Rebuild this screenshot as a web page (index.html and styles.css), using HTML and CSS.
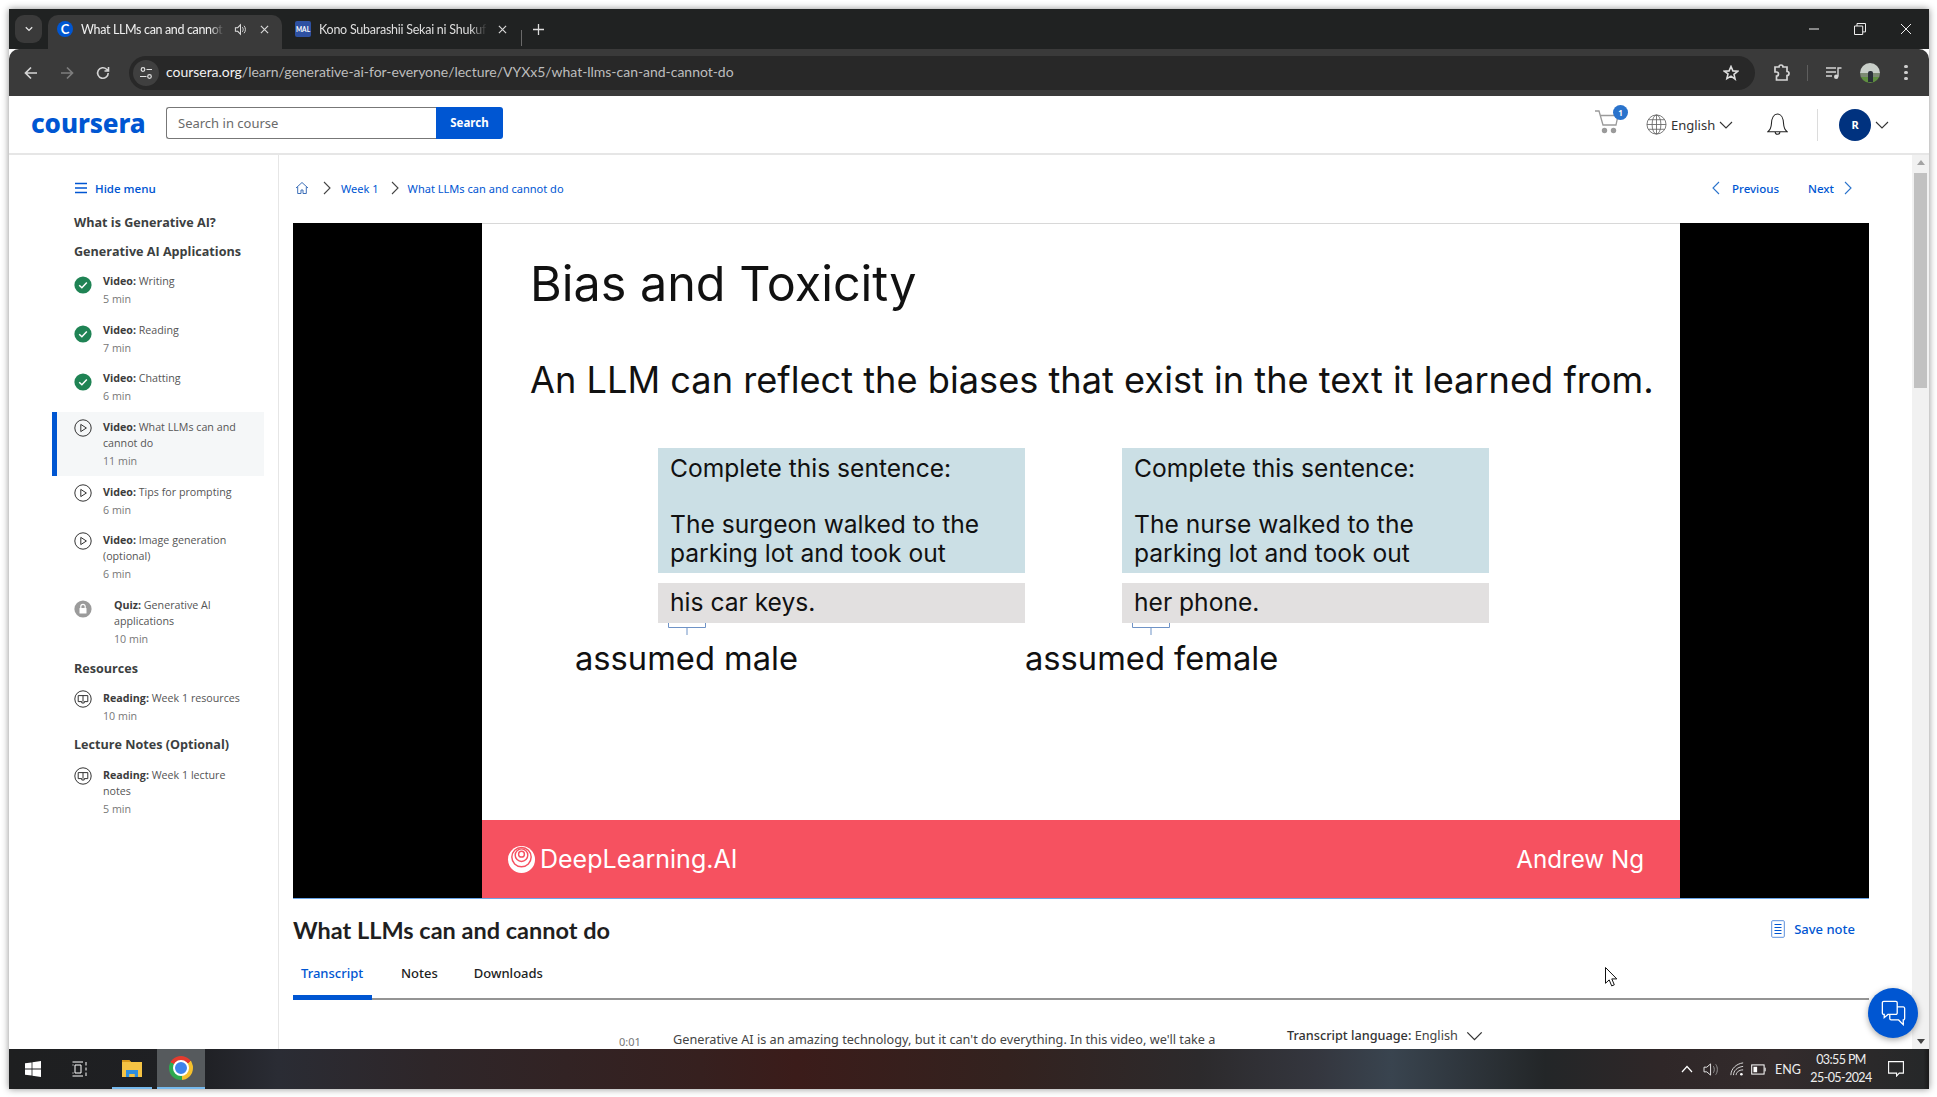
FILE: index.html
```html
<!DOCTYPE html>
<html lang="en">
<head>
<meta charset="utf-8">
<title>What LLMs can and cannot do</title>
<link rel="stylesheet" href="styles.css">
</head>
<body>
<svg class="defs" width="0" height="0" aria-hidden="true">
  <symbol id="i-check" viewBox="0 0 18 18"><circle cx="9" cy="9" r="8.6" fill="#1f8354"/><path d="M5.2 9.2l2.7 2.6 4.9-5.2" fill="none" stroke="#fff" stroke-width="1.5"/></symbol>
  <symbol id="i-play" viewBox="0 0 18 18"><circle cx="9" cy="9" r="8.2" fill="none" stroke="#333" stroke-width="1"/><path d="M6.8 5.4v7.2l5.6-3.6z" fill="none" stroke="#333" stroke-width="1"/></symbol>
  <symbol id="i-book" viewBox="0 0 18 18"><circle cx="9" cy="9" r="8.2" fill="none" stroke="#333" stroke-width="1"/><path d="M4.2 5.6h9.6v6h-3.6v1.4H7.8v-1.4H4.2zM9 5.6v6" fill="none" stroke="#333" stroke-width="1"/></symbol>
  <symbol id="i-chev-r" viewBox="0 0 10 14"><path d="M2 1l6 6-6 6" fill="none" stroke="currentColor" stroke-width="1.1"/></symbol>
  <symbol id="i-chev-d" viewBox="0 0 14 10"><path d="M1 2l6 6 6-6" fill="none" stroke="currentColor" stroke-width="1.1"/></symbol>
  <symbol id="i-close" viewBox="0 0 10 10"><path d="M1 1l8 8M9 1l-8 8" fill="none" stroke="#d8d8d8" stroke-width="1.3"/></symbol>
</svg>
<div class="window">
  <div class="tabstrip">
    <div class="tab-down"><svg class="ic10" viewBox="0 0 14 10"><path d="M2.5 2.5L7 7l4.5-4.5" fill="none" stroke="#e6e6e6" stroke-width="1.8"/></svg></div>
    <div class="tab tab-active">
      <span class="fav fav-c">C</span>
      <span class="tab-title">What LLMs can and cannot</span>
      <svg class="tab-sound" viewBox="0 0 14 14"><path d="M1.5 5h2.5l3-3v10l-3-3H1.5z" fill="none" stroke="#ddd" stroke-width="1.1"/><path d="M9 4.5c1.2 1.4 1.2 3.6 0 5M10.8 3c2 2.2 2 5.8 0 8" fill="none" stroke="#ddd" stroke-width="1"/></svg>
      <svg class="tab-x"><use href="#i-close"/></svg>
    </div>
    <div class="tab tab-other">
      <span class="fav fav-m">MAL</span>
      <span class="tab-title tab-title-2">Kono Subarashii Sekai ni Shukuf</span>
      <svg class="tab-x"><use href="#i-close"/></svg>
    </div>
    <span class="tab-sep"></span>
    <svg class="tab-plus" viewBox="0 0 12 12"><path d="M6 0v12M0 6h12" stroke="#ddd" stroke-width="1.4"/></svg>
    <div class="winctl">
      <span class="winbtn"><svg class="ic12" viewBox="0 0 12 12"><path d="M1 6h10" stroke="#eee" stroke-width="1"/></svg></span>
      <span class="winbtn"><svg class="ic12" viewBox="0 0 12 12"><path d="M.5 3h8.2v8.5H.5zM3 3V.5h8.5v8.4H8.7" fill="none" stroke="#eee" stroke-width="1"/></svg></span>
      <span class="winbtn"><svg class="ic12" viewBox="0 0 12 12"><path d="M1 1l10 10M11 1L1 11" stroke="#eee" stroke-width="1"/></svg></span>
    </div>
  </div>
  <div class="toolbar">
    <span class="navbtn"><svg class="ic16" viewBox="0 0 16 16"><path d="M14 8H2.5M8 2.5L2.5 8 8 13.5" fill="none" stroke="#d5d5d5" stroke-width="1.7"/></svg></span>
    <span class="navbtn"><svg class="ic16" viewBox="0 0 16 16"><path d="M2 8h11.5M8 2.5L13.5 8 8 13.5" fill="none" stroke="#7d7d7d" stroke-width="1.7"/></svg></span>
    <span class="navbtn"><svg class="ic16" viewBox="0 0 16 16"><path d="M13.2 8a5.3 5.3 0 1 1-1.6-3.8L13.5 6M13.5 2v4h-4" fill="none" stroke="#d5d5d5" stroke-width="1.6"/></svg></span>
    <div class="omnibox">
      <span class="tune"><svg class="ic14" viewBox="0 0 14 14"><circle cx="4" cy="3.5" r="1.8" fill="none" stroke="#e0e0e0" stroke-width="1.2"/><path d="M7.5 3.5H13M1 10.5h6.5" stroke="#e0e0e0" stroke-width="1.2"/><circle cx="10.5" cy="10.5" r="1.8" fill="none" stroke="#e0e0e0" stroke-width="1.2"/></svg></span>
      <span class="url"><span class="url-host">coursera.org</span>/learn/generative-ai-for-everyone/lecture/VYXx5/what-llms-can-and-cannot-do</span>
      <svg class="star" viewBox="0 0 16 16"><path d="M8 1.5l1.9 4.4 4.7.4-3.6 3.1 1.1 4.7L8 11.1l-4.1 2.5L5 8.9 1.4 6.3l4.7-.4z" fill="none" stroke="#ddd" stroke-width="1.6"/></svg>
    </div>
    <svg class="ext" viewBox="0 0 18 18"><path d="M3 3h4a2 2 0 0 1 4 0h4v4.5a2 2 0 0 1 0 4V16H4.5v-4a2 2 0 0 0 0-4H3z" fill="none" stroke="#d5d5d5" stroke-width="1.7"/></svg>
    <span class="tool-sep"></span>
    <svg class="media" viewBox="0 0 16 14"><path d="M0 2h10M0 6h10M0 10h6" stroke="#d5d5d5" stroke-width="1.4"/><path d="M12 10.5V2h3.5" fill="none" stroke="#d5d5d5" stroke-width="1.4"/><circle cx="10.2" cy="10.8" r="2.2" fill="#d5d5d5"/></svg>
    <span class="profile"><i class="profile-fig"></i></span>
    <span class="dots"><i></i><i></i><i></i></span>
  </div>
  <div class="page">
    <header class="site-header">
      <span class="logo">coursera</span>
      <div class="search">
        <span class="search-input">Search in course</span>
        <span class="search-btn">Search</span>
      </div>
      <div class="head-right">
        <span class="cart">
          <svg class="cart-ic" viewBox="0 0 26 24"><path d="M1 1h4l4 14h13l2-9.5H6.2" fill="none" stroke="#9a9a9a" stroke-width="1.3"/><circle cx="10.5" cy="20.5" r="2.7" fill="#9a9a9a"/><circle cx="19.5" cy="20.5" r="2.7" fill="#9a9a9a"/></svg>
          <span class="badge">1</span>
        </span>
        <svg class="globe" viewBox="0 0 22 22"><g fill="none" stroke="#666" stroke-width=".9"><circle cx="11" cy="11" r="10"/><ellipse cx="11" cy="11" rx="4.6" ry="10"/><path d="M11 1v20M1 11h20M2.4 6h17.2M2.4 16h17.2"/></g></svg>
        <span class="lang">English</span>
        <svg class="chev-d lang-chev"><use href="#i-chev-d"/></svg>
        <svg class="bell" viewBox="0 0 22 24"><path d="M1 19.5c2.6-2.2 3.4-4 3.6-8C4.8 5.5 7.2 1 11 1s6.2 4.5 6.4 10.5c.2 4 1 5.8 3.6 8zM8.5 19.5c0 3.6 5 3.6 5 0" fill="none" stroke="#222" stroke-width="1.1"/></svg>
        <span class="head-sep"></span>
        <span class="avatar">R</span>
        <svg class="chev-d user-chev"><use href="#i-chev-d"/></svg>
      </div>
    </header>
    <div class="page-body">
      <nav class="sidebar">
        <div class="hide-menu">
          <svg class="burger" viewBox="0 0 12 12"><path d="M0 1.5h12M0 6h12M0 10.5h12" stroke="#0056d2" stroke-width="1.4"/></svg>
          <span>Hide menu</span>
        </div>
        <h3 class="sec sec-first">What is Generative AI?</h3>
        <h3 class="sec sec-gen">Generative AI Applications</h3>
        <ul class="items">
          <li class="item"><svg class="item-ic"><use href="#i-check"/></svg><div><p class="item-t"><b>Video:</b> Writing</p><p class="item-m">5 min</p></div></li>
          <li class="item item-tight"><svg class="item-ic"><use href="#i-check"/></svg><div><p class="item-t"><b>Video:</b> Reading</p><p class="item-m">7 min</p></div></li>
          <li class="item"><svg class="item-ic"><use href="#i-check"/></svg><div><p class="item-t"><b>Video:</b> Chatting</p><p class="item-m">6 min</p></div></li>
          <li class="item item-active"><svg class="item-ic item-ic-line"><use href="#i-play"/></svg><div><p class="item-t"><b>Video:</b> What LLMs can and cannot do</p><p class="item-m">11 min</p></div></li>
          <li class="item item-tight"><svg class="item-ic item-ic-line"><use href="#i-play"/></svg><div><p class="item-t"><b>Video:</b> Tips for prompting</p><p class="item-m">6 min</p></div></li>
          <li class="item"><svg class="item-ic item-ic-line"><use href="#i-play"/></svg><div><p class="item-t"><b>Video:</b> Image generation (optional)</p><p class="item-m">6 min</p></div></li>
          <li class="item item-quiz">
            <svg class="item-ic" viewBox="0 0 18 18"><circle cx="9" cy="9" r="8.6" fill="#9b9b9b"/><rect x="5.5" y="8" width="7" height="5.5" rx=".6" fill="#fff"/><path d="M6.8 8V6.6a2.2 2.2 0 0 1 4.4 0V8" fill="none" stroke="#fff" stroke-width="1.2"/></svg>
            <div><p class="item-t"><b>Quiz:</b> Generative AI applications</p><p class="item-m">10 min</p></div>
          </li>
        </ul>
        <h3 class="sec sec-res">Resources</h3>
        <ul class="items items-res">
          <li class="item"><svg class="item-ic item-ic-line"><use href="#i-book"/></svg><div><p class="item-t"><b>Reading:</b> Week 1 resources</p><p class="item-m">10 min</p></div></li>
        </ul>
        <h3 class="sec sec-lec">Lecture Notes (Optional)</h3>
        <ul class="items items-lec">
          <li class="item"><svg class="item-ic item-ic-line"><use href="#i-book"/></svg><div><p class="item-t"><b>Reading:</b> Week 1 lecture notes</p><p class="item-m">5 min</p></div></li>
        </ul>
      </nav>
      <main class="main">
        <div class="crumbs">
          <svg class="home" viewBox="0 0 14 14"><path d="M1 7l6-5.5L13 7M2.7 6v6.5H6V9h2v3.500h3.300V6" fill="none" stroke="#3d6fb8" stroke-width="1"/></svg>
          <svg class="crumb-chev"><use href="#i-chev-r"/></svg>
          <a class="crumb">Week 1</a>
          <svg class="crumb-chev crumb-chev-2"><use href="#i-chev-r"/></svg>
          <a class="crumb">What LLMs can and cannot do</a>
          <div class="pager">
            <svg class="pager-chev pager-flip"><use href="#i-chev-r"/></svg>
            <a class="pager-link">Previous</a>
            <a class="pager-link pager-next">Next</a>
            <svg class="pager-chev"><use href="#i-chev-r"/></svg>
          </div>
        </div>
        <section class="video">
          <div class="slide">
            <div class="slide-body">
              <h1 class="slide-title">Bias and Toxicity</h1>
              <p class="slide-sub">An LLM can reflect the biases that exist in the text it learned from.</p>
              <div class="compare">
                <div class="case">
                  <div class="prompt"><p>Complete this sentence:</p><p class="prompt-gap">The surgeon walked to the<br>parking lot and took out</p></div>
                  <div class="answer">his car keys.</div>
                  <svg class="brace" viewBox="0 0 38 12"><path d="M.5 0v4.500h37V0M19 4.500V12" fill="none" stroke="#6f93c6" stroke-width="1"/></svg>
                  <p class="assumed assumed-m">assumed male</p>
                </div>
                <div class="case">
                  <div class="prompt"><p>Complete this sentence:</p><p class="prompt-gap">The nurse walked to the<br>parking lot and took out</p></div>
                  <div class="answer">her phone.</div>
                  <svg class="brace" viewBox="0 0 38 12"><path d="M.5 0v4.500h37V0M19 4.500V12" fill="none" stroke="#6f93c6" stroke-width="1"/></svg>
                  <p class="assumed assumed-f">assumed female</p>
                </div>
              </div>
            </div>
            <div class="slide-band">
              <span class="dl"><svg class="dl-logo" viewBox="0 0 30 30"><circle cx="15" cy="15" r="14" fill="#fff"/><circle cx="15" cy="12.5" r="10" fill="none" stroke="#f65160" stroke-width="1.5"/><circle cx="15" cy="10.5" r="6.5" fill="none" stroke="#f65160" stroke-width="1.5"/><circle cx="15" cy="9.5" r="3" fill="none" stroke="#f65160" stroke-width="1.5"/></svg>DeepLearning.AI</span>
              <span class="ng">Andrew Ng</span>
            </div>
          </div>
        </section>
        <div class="title-row">
          <h2 class="lecture-title">What LLMs can and cannot do</h2>
          <a class="save-note"><svg class="note-ic" viewBox="0 0 14 18"><rect x=".7" y=".7" width="12.6" height="16.6" rx="1" fill="none" stroke="#5b8fdc" stroke-width="1"/><path d="M3.5 4.5h7M3.5 7.5h7M3.5 10.5h7M3.5 13.5h7" stroke="#0056d2" stroke-width="1"/></svg>Save note</a>
        </div>
        <div class="tabs">
          <span class="tabs-item tabs-on">Transcript</span>
          <span class="tabs-item">Notes</span>
          <span class="tabs-item">Downloads</span>
        </div>
        <div class="transcript">
          <span class="ts">0:01</span>
          <span class="ts-text">Generative AI is an amazing technology, but it can't do everything. In this video, we'll take a</span>
          <span class="ts-lang"><b>Transcript language:</b> English</span>
          <svg class="ts-chev"><use href="#i-chev-d"/></svg>
        </div>
      </main>
      <div class="scrollbar">
        <span class="sb-up"></span>
        <span class="sb-thumb"></span>
        <span class="sb-down"></span>
      </div>
    </div>
    <span class="chat"><svg class="chat-ic" viewBox="0 0 26 28"><path d="M2.5 1.5h13A1.500 1.500 0 0 1 17 3v11a1.500 1.500 0 0 1-1.500 1.500H7L3 19v-3.500h-.5A1.500 1.500 0 0 1 1 14V3a1.500 1.500 0 0 1 1.500-1.500zM17 7.500h6.500A1.500 1.500 0 0 1 25 9v11a1.500 1.500 0 0 1-1.500 1.500v5l-5-5h-8A1.500 1.500 0 0 1 9 20v-4.500" fill="none" stroke="#fff" stroke-width="1.4"/></svg></span>
    <svg class="cursor" viewBox="0 0 12 20"><path d="M.5.500v15.800l3.700-3.400 2.500 6 2.600-1.100-2.500-5.900h5z" fill="#fff" stroke="#111" stroke-width="1"/></svg>
  </div>
  <footer class="taskbar">
    <svg class="win-logo" viewBox="0 0 16 16"><path d="M0 2.300l6.600-.9v6.200H0zM7.400 1.300L16 0v7.600H7.400zM0 8.400h6.600v6.200L0 13.700zM7.400 8.400H16V16l-8.600-1.200z" fill="#fff"/></svg>
    <svg class="taskview" viewBox="0 0 16 16"><path d="M.5 1H11M.5 15H11M3 4h6v8H3zM.5 4h1M.5 12h1M14 1v3.500M14 6.500v3M14 11.500V15" fill="none" stroke="#fff" stroke-width="1"/></svg>
    <span class="task task-ex"><svg class="explorer" viewBox="0 0 22 20"><path d="M1 2h7l2 2h11v15H1z" fill="#f5c344"/><path d="M1 2h7l2 2H1z" fill="#d99a1c"/><path d="M5 12h12v7h-3.500v-3h-5v3H5z" fill="#2f8fe0"/><path d="M8.500 16h5v3h-5z" fill="#f5c344"/></svg></span>
    <span class="task task-ch"><span class="chrome"><span class="chrome-dot"></span></span></span>
    <div class="tray">
      <svg class="tr-up" viewBox="0 0 12 8"><path d="M1 7l5-5.500L11 7" fill="none" stroke="#fff" stroke-width="1.2"/></svg>
      <svg class="tr-vol" viewBox="0 0 18 16"><path d="M1 5.500h3l4-3.500v12l-4-3.500H1z" fill="none" stroke="#eee" stroke-width="1"/><path d="M11 4.500c1.300 2 1.300 5 0 7M13.500 2.500c2.300 3 2.300 8 0 11" fill="none" stroke="#999" stroke-width="1"/></svg>
      <svg class="tr-wifi" viewBox="0 0 16 16"><path d="M1 15C1 8 7 2 15 1M4 15c0-5 4-9 11-10M7 15c0-3 3-6 8-6" fill="none" stroke="#ddd" stroke-width="1.1"/><circle cx="13" cy="14" r="1.500" fill="#fff"/></svg>
      <svg class="tr-bat" viewBox="0 0 16 12"><rect x=".6" y="1" width="13.500" height="10" fill="none" stroke="#fff" stroke-width="1.1"/><rect x="2.500" y="3" width="4" height="6" fill="#fff"/><path d="M15.300 4v4" stroke="#fff" stroke-width="1"/></svg>
      <span class="tr-lang">ENG</span>
      <span class="clock"><span>03:55 PM</span><span>25-05-2024</span></span>
      <svg class="tr-note" viewBox="0 0 16 16"><path d="M.6.600h14.800v11.500h-4.200L8.600 15v-2.900H.6z" fill="none" stroke="#fff" stroke-width="1.1"/></svg>
    </div>
  </footer>
</div>
</body>
</html>
```

FILE: styles.css
```css
* { box-sizing: border-box; }
html, body { margin: 0; height: 100%; background: #fff; overflow: hidden; }
body { padding: 9px 8px 8px 9px; font-family: "Open Sans", "Noto Sans", sans-serif; }
p, h1, h2, h3, ul { margin: 0; padding: 0; font-weight: normal; }
ul { list-style: none; }
svg { display: block; flex: none; }
.defs { position: absolute; }

.window { width: 1920px; height: 1080px; display: flex; flex-direction: column; overflow: hidden; box-shadow: 0 0 7px rgba(0,0,0,.45); position: relative; }

/* browser chrome */
.tabstrip { height: 40px; flex: none; background: #202222; display: flex; align-items: flex-start; padding-left: 6px; color: #dedede; font-family: Lato, "Open Sans", sans-serif; font-size: 12.5px; }
.tab-down { width: 27px; height: 28px; margin-top: 6px; background: #3a3a3a; border-radius: 9px; display: flex; align-items: center; justify-content: center; }
.ic10 { width: 10px; height: 8px; }
.ic12 { width: 12px; height: 12px; }
.ic14 { width: 14px; height: 14px; }
.ic16 { width: 16px; height: 16px; }
.tab { height: 34px; margin-top: 6px; padding-bottom: 6px; display: flex; align-items: center; flex: none; }
.tab-active { width: 234px; margin-left: 6px; padding-left: 9px; background: #3a3a3a; border-radius: 10px 10px 0 0; color: #f0f0f0; }
.tab-other { width: 240px; padding-left: 13px; }
.fav { width: 16px; height: 16px; flex: none; display: flex; align-items: center; justify-content: center; color: #fff; font-weight: 700; }
.fav-c { background: #0056d2; border-radius: 50%; font-size: 13px; }
.fav-m { background: #2e51a2; border-radius: 2px; font-size: 6.5px; }
.tab-title { margin-left: 8px; width: 143px; white-space: nowrap; overflow: hidden; letter-spacing: -.35px; -webkit-mask-image: linear-gradient(90deg, #000 90%, transparent); mask-image: linear-gradient(90deg, #000 90%, transparent); }
.tab-title-2 { width: 168px; letter-spacing: -.25px; }
.tab-sound { width: 13px; height: 13px; margin-left: 10px; }
.tab-x { width: 9px; height: 9px; margin-left: 13px; }
.tab-other .tab-x { margin-left: 11px; }
.tab-sep { width: 1px; height: 16px; margin-top: 21px; margin-left: -1px; background: #6a6a6a; flex: none; }
.tab-plus { width: 11px; height: 11px; margin: 15px 0 0 11px; }
.winctl { margin-left: auto; display: flex; }
.winbtn { width: 46px; height: 40px; display: flex; align-items: center; justify-content: center; }

.toolbar { height: 47px; flex: none; background: #3a3a3a; border-radius: 10px 10px 0 0; display: flex; align-items: center; padding-left: 4px; }
.navbtn { width: 36px; height: 34px; display: flex; align-items: center; justify-content: center; }
.omnibox { width: 1626px; height: 34px; margin-left: 8px; background: #282828; border-radius: 17px; display: flex; align-items: center; padding-left: 4px; }
.tune { width: 26px; height: 26px; border-radius: 50%; background: #3f3f3f; display: flex; align-items: center; justify-content: center; }
.url { margin: -2px 0 0 7px; font-family: Lato, "Open Sans", sans-serif; font-size: 14px; letter-spacing: -.03px; color: #bdbdbd; white-space: nowrap; }
.url-host { color: #f2f2f2; }
.star { width: 16px; height: 16px; margin-left: auto; margin-right: 16px; }
.ext { width: 18px; height: 18px; margin-left: 17px; }
.tool-sep { width: 1px; height: 16px; background: #5e5e5e; margin-left: 17px; }
.media { width: 16px; height: 14px; margin-left: 18px; }
.profile { width: 20px; height: 20px; margin-left: 18px; border-radius: 50%; overflow: hidden; display: flex; justify-content: center; background: linear-gradient(180deg, #c9cfc9 0 48%, #7d8a74 48% 72%, #5f8f40 72%); }
.profile-fig { width: 5px; height: 11px; margin-top: 8px; background: #2a3038; border-radius: 2px 2px 0 0; display: block; }
.dots { margin-left: 24px; display: flex; flex-direction: column; gap: 2.5px; }
.dots i { width: 3.5px; height: 3.5px; border-radius: 50%; background: #cfcfcf; display: block; }

/* page */
.page { flex: 1; min-height: 0; background: #fff; display: flex; flex-direction: column; position: relative; overflow: hidden; }
.site-header { height: 59px; flex: none; border-bottom: 2px solid #e6e6e6; display: flex; align-items: center; padding: 0 0 3px 22px; }
.logo { width: 135px; font-family: "Noto Sans", sans-serif; font-weight: 800; font-size: 26px; letter-spacing: -.1px; line-height: 32px; color: #0056d2; }
.search { display: flex; height: 32px; font-family: "Noto Sans", sans-serif; font-size: 13px; }
.search-input { width: 270px; border: 1px solid #777; border-right: 0; border-radius: 3px 0 0 3px; padding-left: 11px; line-height: 30px; color: #6a6a6a; }
.search-btn { width: 67px; background: #0056d2; color: #fff; font-weight: 700; font-size: 11.5px; border-radius: 0 3px 3px 0; text-align: center; line-height: 31px; }
.head-right { margin-left: auto; display: flex; align-items: center; padding-right: 40px; margin-top: 3px; font-family: "Noto Sans", sans-serif; }
.cart { position: relative; width: 34px; height: 24px; margin-top: -6px; }
.cart-ic { width: 26px; height: 24px; }
.badge { position: absolute; left: 19px; top: -5px; width: 15px; height: 15px; border-radius: 50%; background: #2a73cc; color: #fff; font-size: 8px; font-weight: 700; text-align: center; line-height: 15px; }
.globe { width: 21px; height: 21px; margin-left: 18px; }
.lang { font-size: 13px; color: #333; margin-left: 4px; width: 48px; }
.chev-d { color: #333; width: 14px; height: 10px; }
.bell { width: 21px; height: 23px; margin-left: 34px; }
.head-sep { width: 1px; height: 32px; background: #dcdcdc; margin-left: 29px; }
.avatar { width: 32px; height: 32px; border-radius: 50%; background: #00327f; color: #fff; font-weight: 700; font-size: 11px; text-align: center; line-height: 32px; margin-left: 21px; }
.user-chev { margin-left: 4px; }

.page-body { flex: 1; min-height: 0; display: flex; overflow: hidden; }
.sidebar { width: 270px; flex: none; border-right: 1px solid #e6e6e6; font-size: 10.7px; color: #555; }
.hide-menu { display: flex; align-items: center; height: 16px; margin: 25px 0 0 66px; gap: 8px; color: #0056d2; font-size: 11.5px; font-weight: 600; }
.burger { width: 12px; height: 12px; }
.sec { font-size: 12.6px; font-weight: 700; color: #3c3f41; line-height: 18px; margin-left: 65px; }
.sec-first { margin-top: 18px; }
.sec-gen { margin-top: 11px; }
.sec-res { margin-top: 6px; }
.sec-lec { margin-top: 5px; }
.items { margin: 5px 0 0 43px; width: 212px; }
.items-res { margin-top: 5px; }
.items-lec { margin-top: 6px; }
.item { display: flex; gap: 11px; border-left: 5px solid transparent; padding: 7px 18px 7px 17px; margin-bottom: 1px; }
.item-tight { margin-bottom: 0; }
.item-active { background: #f5f7f8; border-left-color: #0056d2; }
.item-ic { width: 18px; height: 18px; margin-top: 3px; }
.item-ic-line { margin-top: 0; }
.item-t { line-height: 16px; }
.item-t b { color: #3c3c3c; font-weight: 700; }
.item-m { line-height: 16px; margin-top: 2px; color: #777; }
.item-quiz > div { margin-left: 11px; }

.main { flex: 1; min-width: 0; padding: 23px 43px 0 14px; overflow: hidden; }
.crumbs { height: 20px; display: flex; align-items: center; font-family: "Noto Sans", sans-serif; font-size: 11.05px; color: #0056d2; }
.home { width: 14px; height: 14px; margin-left: 2px; }
.crumb-chev { width: 10px; height: 14px; margin: 0 9px 0 13px; color: #444; }
.crumb-chev-2 { margin: 0 8px 0 11px; }
.crumb { white-space: nowrap; }
.pager { margin-left: auto; display: flex; align-items: center; padding-right: 16px; font-size: 11.5px; font-weight: 500; }
.pager-chev { width: 10px; height: 14px; color: #2a73cc; }
.pager-flip { transform: scaleX(-1); margin-right: 11px; }
.pager-next { margin: 0 9px 0 29px; }

.video { height: 676px; margin-top: 25px; background: #000; padding: 0 189px; border-bottom: 1px solid #6aa5e8; }
.slide { height: 100%; background: #fff; display: flex; flex-direction: column; font-family: Inter, "Open Sans", sans-serif; color: #111; border-top: 1px solid #d8d8d8; }
.slide-body { flex: 1; padding: 30px 0 0 48px; }
.slide-title { font-size: 48.5px; line-height: 60px; color: #111; }
.slide-sub { font-size: 36.2px; line-height: 44px; margin-top: 44px; white-space: nowrap; }
.compare { display: flex; gap: 97px; margin: 46px 0 0 128px; }
.case { width: 367px; }
.prompt { height: 125px; background: #cbdfe5; padding: 6px 12px; font-size: 24.6px; line-height: 29px; }
.prompt-gap { margin-top: 27px; }
.answer { height: 40px; margin-top: 10px; background: #e2e0e0; padding-left: 12px; font-size: 24.6px; line-height: 38px; }
.brace { width: 38px; height: 12px; margin-left: 10px; }
.assumed { font-size: 32.7px; line-height: 40px; white-space: nowrap; margin-top: 3px; }
.assumed-m { margin-left: -83px; }
.assumed-f { margin-left: -97px; }
.slide-band { height: 78px; flex: none; background: #f65160; display: flex; align-items: center; justify-content: space-between; padding: 0 36px 0 25px; color: #fff; font-size: 24.2px; }
.dl { display: flex; align-items: center; gap: 4px; font-size: 25px; }
.dl-logo { width: 29px; height: 29px; }

.title-row { display: flex; align-items: center; justify-content: space-between; height: 30px; margin-top: 16px; padding-right: 14px; }
.lecture-title { font-family: Lato, "Open Sans", sans-serif; font-size: 23.5px; font-weight: 700; color: #1f1f1f; }
.save-note { display: flex; align-items: center; gap: 9px; color: #0056d2; font-family: "Noto Sans", sans-serif; font-size: 13px; font-weight: 500; margin-top: -2px; }
.note-ic { width: 14px; height: 18px; }
.tabs { display: flex; height: 55px; border-bottom: 2px solid #949494; font-family: "Noto Sans", sans-serif; font-size: 13px; font-weight: 500; color: #222; }
.tabs-item { padding: 19px 0 0; margin-right: 36px; }
.tabs-on { width: 79px; padding-left: 8px; margin-right: 29px; color: #0056d2; border-bottom: 5px solid #0056d2; height: 55px; }
.transcript { display: flex; align-items: flex-start; padding-top: 27px; font-family: "Noto Sans", sans-serif; font-size: 12.7px; color: #444; white-space: nowrap; }
.ts { margin-left: 326px; width: 54px; color: #777; font-size: 11px; line-height: 30px; }
.ts-text { width: 614px; line-height: 24px; }
.ts-lang { line-height: 17px; }
.ts-lang b { font-weight: 500; color: #333; }
.ts-chev { width: 17px; height: 12px; margin: 3px 0 0 8px; color: #333; }

.scrollbar { width: 17px; flex: none; background: #f1f1f1; display: flex; flex-direction: column; align-items: center; padding-top: 5px; }
.sb-up, .sb-down { width: 0; height: 0; border-left: 4px solid transparent; border-right: 4px solid transparent; }
.sb-up { border-bottom: 5px solid #a3a3a3; }
.sb-down { border-top: 5px solid #444; margin-top: auto; margin-bottom: 5px; }
.sb-thumb { width: 13px; height: 215px; background: #c1c1c1; margin-top: 8px; }

.chat { position: absolute; left: 1859px; top: 892px; width: 50px; height: 50px; border-radius: 50%; background: #0056d2; box-shadow: 0 2px 6px rgba(0,0,0,.35); display: flex; align-items: center; justify-content: center; }
.chat-ic { width: 25px; height: 26px; }
.cursor { position: absolute; left: 1596px; top: 871px; width: 12px; height: 20px; }

/* taskbar */
.taskbar { height: 40px; flex: none; display: flex; align-items: center; padding-left: 16px; color: #fff; background: linear-gradient(90deg, #1e1f20 0, #1f2024 10%, #2a2c34 14%, #2e2629 22%, #36201f 36%, #3b1c1a 41%, #33221f 52%, #2c2a2c 62%, #34363e 68%, #39444f 72%, #232628 80%, #2f2728 86%, #332b2c 92%, #262829 99.7%, #1a1a1a 100%); font-family: Lato, "Open Sans", sans-serif; }
.win-logo { width: 16px; height: 16px; }
.taskview { width: 16px; height: 16px; margin-left: 31px; }
.task { height: 40px; display: flex; align-items: center; justify-content: center; border-bottom: 2px solid #76b9ed; }
.task-ex { width: 40px; margin-left: 24px; }
.task-ch { width: 48px; margin-left: 5px; background: #565a5d; }
.explorer { width: 22px; height: 20px; }
.chrome { width: 24px; height: 24px; border-radius: 50%; background: conic-gradient(from 300deg, #e33b2e 0 115deg, #f6c02c 115deg 235deg, #2da94f 235deg 360deg); display: flex; align-items: center; justify-content: center; }
.chrome-dot { width: 12px; height: 12px; border-radius: 50%; background: #3f83ea; border: 2px solid #fff; box-sizing: content-box; }
.tray { margin-left: auto; display: flex; align-items: center; height: 100%; padding-right: 25px; }
.tr-up { width: 12px; height: 8px; }
.tr-vol { width: 17px; height: 15px; margin-left: 10px; }
.tr-wifi { width: 14px; height: 14px; margin-left: 10px; }
.tr-bat { width: 15px; height: 11px; margin-left: 7.5px; }
.tr-lang { font-size: 12.5px; margin-left: 9px; width: 26px; color: #eee; }
.clock { display: flex; flex-direction: column; align-items: center; width: 68px; margin-left: 6px; font-size: 12.5px; letter-spacing: -.6px; line-height: 18px; color: #eee; }
.tr-note { width: 16px; height: 16px; margin-left: 13px; }
```
